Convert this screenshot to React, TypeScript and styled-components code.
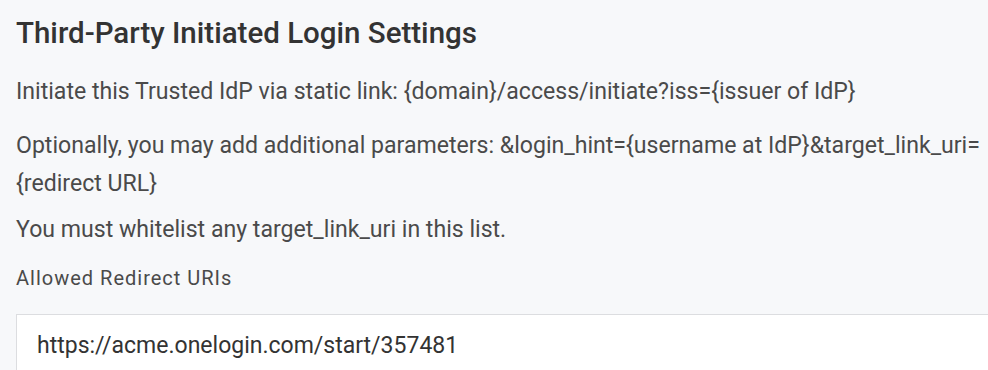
import React from "react";
import styled, { createGlobalStyle } from "styled-components";

const Global = createGlobalStyle`
  html, body { margin: 0; padding: 0; background: #f7f8fa; }
  body { font-family: Roboto, "Liberation Sans", sans-serif; overflow: hidden; }
`;

const Page = styled.div`
  width: 988px;
  height: 370px;
  box-sizing: border-box;
  padding: 15px 0 0 16px;
  background: #f7f8fa;
  overflow: hidden;
`;

const Title = styled.h2`
  margin: 0;
  font-size: 29.5px;
  line-height: 36px;
  font-weight: 500;
  color: #333;
`;

const Para = styled.p<{ $top: number }>`
  margin: ${(p) => p.$top}px 0 0;
  font-size: 23.1px;
  line-height: 38px;
  color: #4a4a4a;
  white-space: nowrap;
`;

const Label = styled.div`
  margin-top: 17px;
  font-size: 20px;
  line-height: 24px;
  letter-spacing: 1px;
  color: #4a4a4a;
`;

const UriInput = styled.div`
  margin-top: 24px;
  width: 1000px;
  box-sizing: border-box;
  background: #fff;
  border: 1px solid #dcdde0;
  border-right: none;
  padding: 12px 20px 10px;
  font-size: 23px;
  line-height: 38px;
  color: #333;
`;

export default function App() {
  return (
    <Page>
      <Global />
      <Title>Third-Party Initiated Login Settings</Title>
      <Para $top={22}>
        Initiate this Trusted IdP via static link: {"{domain}"}/access/initiate?iss={"{issuer of IdP}"}
      </Para>
      <Para $top={16}>
        Optionally, you may add additional parameters: &amp;login_hint={"{username at IdP}"}&amp;target_link_uri=
        <br />
        {"{redirect URL}"}
      </Para>
      <Para $top={8}>You must whitelist any target_link_uri in this list.</Para>
      <Label>Allowed Redirect URIs</Label>
      <UriInput>https://acme.onelogin.com/start/357481</UriInput>
    </Page>
  );
}
